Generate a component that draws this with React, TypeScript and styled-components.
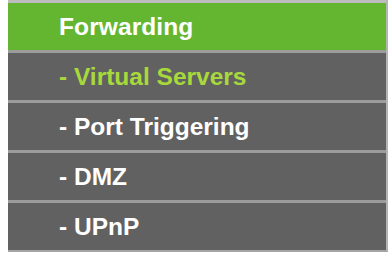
import React from 'react';
import styled, { createGlobalStyle } from 'styled-components';

const GlobalStyle = createGlobalStyle`
  html, body {
    margin: 0;
    padding: 0;
    background: #ffffff;
  }
  body {
    font-family: "Liberation Sans", Arial, sans-serif;
  }
`;

const Menu = styled.ul`
  list-style: none;
  margin: 0 0 0 8px;
  padding: 0;
  width: 378px;
  border-right: 2px solid #b4b4b4;
  border-bottom: 2px solid #a4a4a4;
`;

const MenuItem = styled.li<{ $header?: boolean; $active?: boolean }>`
  display: flex;
  align-items: center;
  height: 47px;
  padding-left: 51px;
  border-top: 3px solid ${p => (p.$header ? '#bcbcbc' : '#9c9c9c')};
  background-color: ${p => (p.$header ? '#64b631' : '#616161')};
  color: ${p => (p.$active ? '#a8d93c' : '#ffffff')};
  font-size: 24.5px;
  font-weight: bold;
  letter-spacing: ${p => (p.$header ? '0.1px' : '0')};
  white-space: nowrap;
  cursor: pointer;
`;

const items = [
  { label: '- Virtual Servers', active: true },
  { label: '- Port Triggering', active: false },
  { label: '- DMZ', active: false },
  { label: '- UPnP', active: false },
];

const App: React.FC = () => {
  return (
    <>
      <GlobalStyle />
      <Menu>
        <MenuItem $header>Forwarding</MenuItem>
        {items.map(item => (
          <MenuItem key={item.label} $active={item.active}>
            {item.label}
          </MenuItem>
        ))}
      </Menu>
    </>
  );
};

export default App;
